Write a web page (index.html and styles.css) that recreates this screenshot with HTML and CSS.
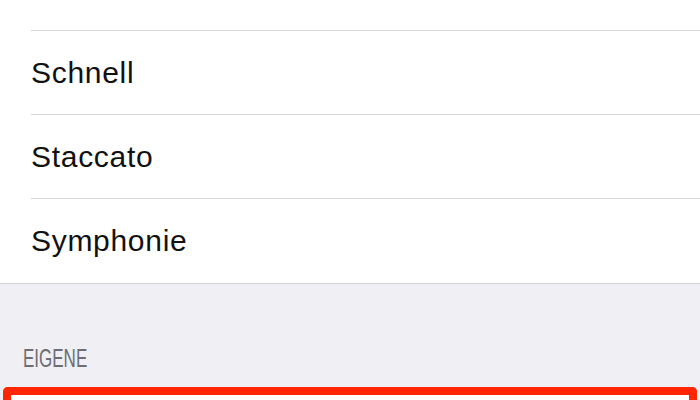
FILE: index.html
```html
<!DOCTYPE html>
<html lang="de">
<head>
<meta charset="utf-8">
<link rel="stylesheet" href="styles.css">
</head>
<body>
<div class="list">
  <div class="row"><span class="label">S.O.S.</span></div>
  <div class="row"><span class="label">Schnell</span></div>
  <div class="row"><span class="label">Staccato</span></div>
  <div class="row last"><span class="label">Symphonie</span></div>
</div>
<div class="section">
  <div class="header"><span class="header-text">EIGENE</span></div>
  <div class="highlight">
    <div class="highlight-inner"></div>
  </div>
</div>
</body>
</html>
```

FILE: styles.css
```css
html, body {
  margin: 0;
  padding: 0;
  background: #efeff4;
  font-family: "Liberation Sans", Arial, sans-serif;
  overflow: hidden;
}

.list {
  margin-top: -53px;
  background: #ffffff;
  border-bottom: 1px solid #d3d2d7;
}

.row {
  margin-left: 31px;
  height: 83px;
  border-bottom: 1px solid #d6d5da;
  display: flex;
  align-items: center;
}

.row.last {
  border-bottom: 1px solid transparent;
}

.label {
  font-size: 30px;
  letter-spacing: 0.7px;
  color: #111111;
  line-height: 1;
  padding-top: 1px;
}

.section {
  padding-top: 58px;
}

.header {
  padding-left: 23px;
  height: 45px;
}

.header-text {
  display: inline-block;
  font-size: 25px;
  line-height: 32px;
  color: #6d6d72;
  transform: scaleX(0.68);
  transform-origin: left center;
}

.highlight {
  margin: 0 3px;
  border: 8px solid #fe2600;
  border-bottom: none;
  border-radius: 5px 5px 0 0;
  height: 40px;
  background: #ffffff;
}
```
